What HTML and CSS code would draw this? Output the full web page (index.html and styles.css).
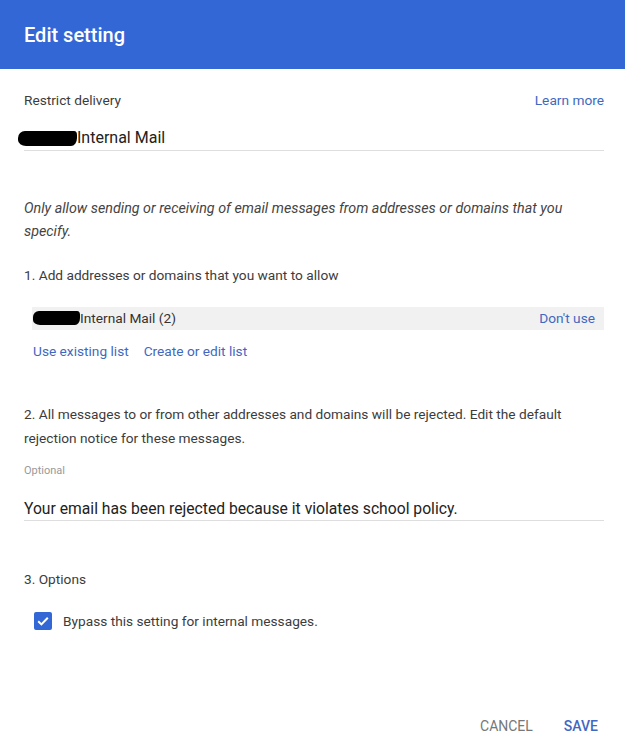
FILE: index.html
```html
<!DOCTYPE html>
<html lang="en">
<head>
<meta charset="utf-8">
<title>Edit setting</title>
<link rel="stylesheet" href="styles.css">
</head>
<body>
<div class="dialog">
  <header class="dialog-header">
    <h1 class="dialog-title">Edit setting</h1>
  </header>
  <main class="dialog-body">
    <div class="label-row">
      <span class="label">Restrict delivery</span>
      <a class="link" href="#">Learn more</a>
    </div>
    <div class="field field-name">
      <span class="redact redact-a"></span><span class="field-text">Internal Mail</span>
    </div>

    <p class="description">Only allow sending or receiving of email messages from addresses or domains that you specify.</p>

    <p class="step step-1">1. Add addresses or domains that you want to allow</p>
    <div class="list-row">
      <span class="list-name"><span class="redact redact-b"></span>Internal Mail (2)</span>
      <a class="link" href="#">Don't use</a>
    </div>
    <div class="list-links">
      <a class="link" href="#">Use existing list</a>
      <a class="link" href="#">Create or edit list</a>
    </div>

    <p class="step step-2">2. All messages to or from other addresses and domains will be rejected. Edit the default rejection notice for these messages.</p>
    <div class="hint">Optional</div>
    <div class="field field-notice">
      <span class="field-text">Your email has been rejected because it violates school policy.</span>
    </div>

    <p class="step step-3">3. Options</p>
    <label class="option">
      <span class="checkbox">
        <svg viewBox="0 0 18 18" width="18" height="18" aria-hidden="true">
          <path d="M4.2 9.3 L7.4 12.4 L13.8 5.8" fill="none" stroke="#fff" stroke-width="2"/>
        </svg>
      </span>
      <span class="option-text">Bypass this setting for internal messages.</span>
    </label>
  </main>
  <footer class="dialog-footer">
    <button class="btn btn-cancel" type="button">Cancel</button>
    <button class="btn btn-save" type="button">Save</button>
  </footer>
</div>
</body>
</html>
```
FILE: styles.css
```css
* { box-sizing: border-box; }
html, body { margin: 0; padding: 0; background: #fff; }
body {
  font-family: Roboto, "Liberation Sans", Arial, sans-serif;
  color: #333;
  font-size: 13.7px;
}
.dialog {
  width: 625px;
  height: 750px;
  display: flex;
  flex-direction: column;
}
.dialog-header {
  height: 69px;
  background: #3367d6;
  padding: 0 24px;
  display: flex;
  align-items: center;
  flex-shrink: 0;
}
.dialog-title {
  margin: 0;
  color: #fff;
  font-size: 20px;
  font-weight: 500;
  line-height: 24px;
}
.dialog-body {
  padding: 0 21px 0 24px;
  flex: 1;
}
.link {
  color: #3f68c0;
  text-decoration: none;
}
.label-row {
  margin-top: 21px;
  display: flex;
  justify-content: space-between;
  line-height: 20px;
  font-size: 13.7px;
}
.label { color: #3c3c3c; }
.field {
  border-bottom: 1px solid #dedede;
  color: #222;
  display: flex;
  align-items: center;
}
.field-name {
  margin-top: 18px;
  font-size: 16px;
  line-height: 20px;
  padding-bottom: 2px;
}
.redact {
  display: inline-block;
  background: #000;
}
.redact-a {
  width: 59px;
  height: 15px;
  margin-left: -6px;
  border-radius: 7px 3px 6px 8px / 7px 4px 8px 6px;
}
.redact-b {
  width: 47px;
  height: 14px;
  vertical-align: -2px;
  border-radius: 6px 3px 5px 7px / 6px 4px 7px 5px;
}
.description {
  margin: 46px 0 0;
  font-style: italic;
  line-height: 23px;
  font-size: 14.3px;
  color: #444;
}
.step {
  margin: 0;
  line-height: 20px;
  font-size: 13.7px;
  color: #3c3c3c;
}
.step-1 { margin-top: 22px; }
.list-row {
  margin: 22px 0 0 8px;
  background: #f1f1f1;
  height: 23px;
  line-height: 23px;
  display: flex;
  justify-content: space-between;
  padding: 0 9px 0 1px;
  font-size: 13.7px;
}
.list-name { color: #333; }
.list-links {
  margin: 11px 0 0 9px;
  line-height: 20px;
  display: flex;
  gap: 15px;
}
.step-2 {
  margin-top: 41px;
  line-height: 24px;
}
.hint {
  margin-top: 13px;
  font-size: 11px;
  line-height: 16px;
  color: #999;
}
.field-notice {
  margin-top: 20px;
  font-size: 15.7px;
  line-height: 20px;
  padding-bottom: 1px;
}
.step-3 { margin-top: 48px; }
.option {
  margin: 22px 0 0 10px;
  display: flex;
  align-items: center;
  gap: 11px;
  height: 20px;
}
.checkbox {
  width: 18px;
  height: 18px;
  border-radius: 2px;
  background: #3367d6;
  display: inline-flex;
}
.option-text {
  font-size: 13.7px;
  color: #3c3c3c;
}
.dialog-footer {
  display: flex;
  justify-content: flex-end;
  gap: 31px;
  padding: 0 27px 0 0;
  height: 38px;
  align-items: center;
  margin-bottom: 5px;
}
.btn {
  background: none;
  border: 0;
  padding: 0;
  font-family: inherit;
  font-size: 14px;
  font-weight: 500;
  text-transform: uppercase;
  cursor: pointer;
  line-height: 20px;
}
.btn-cancel { color: #777; font-weight: 400; }
.btn-save { color: #3f68c0; }
```
